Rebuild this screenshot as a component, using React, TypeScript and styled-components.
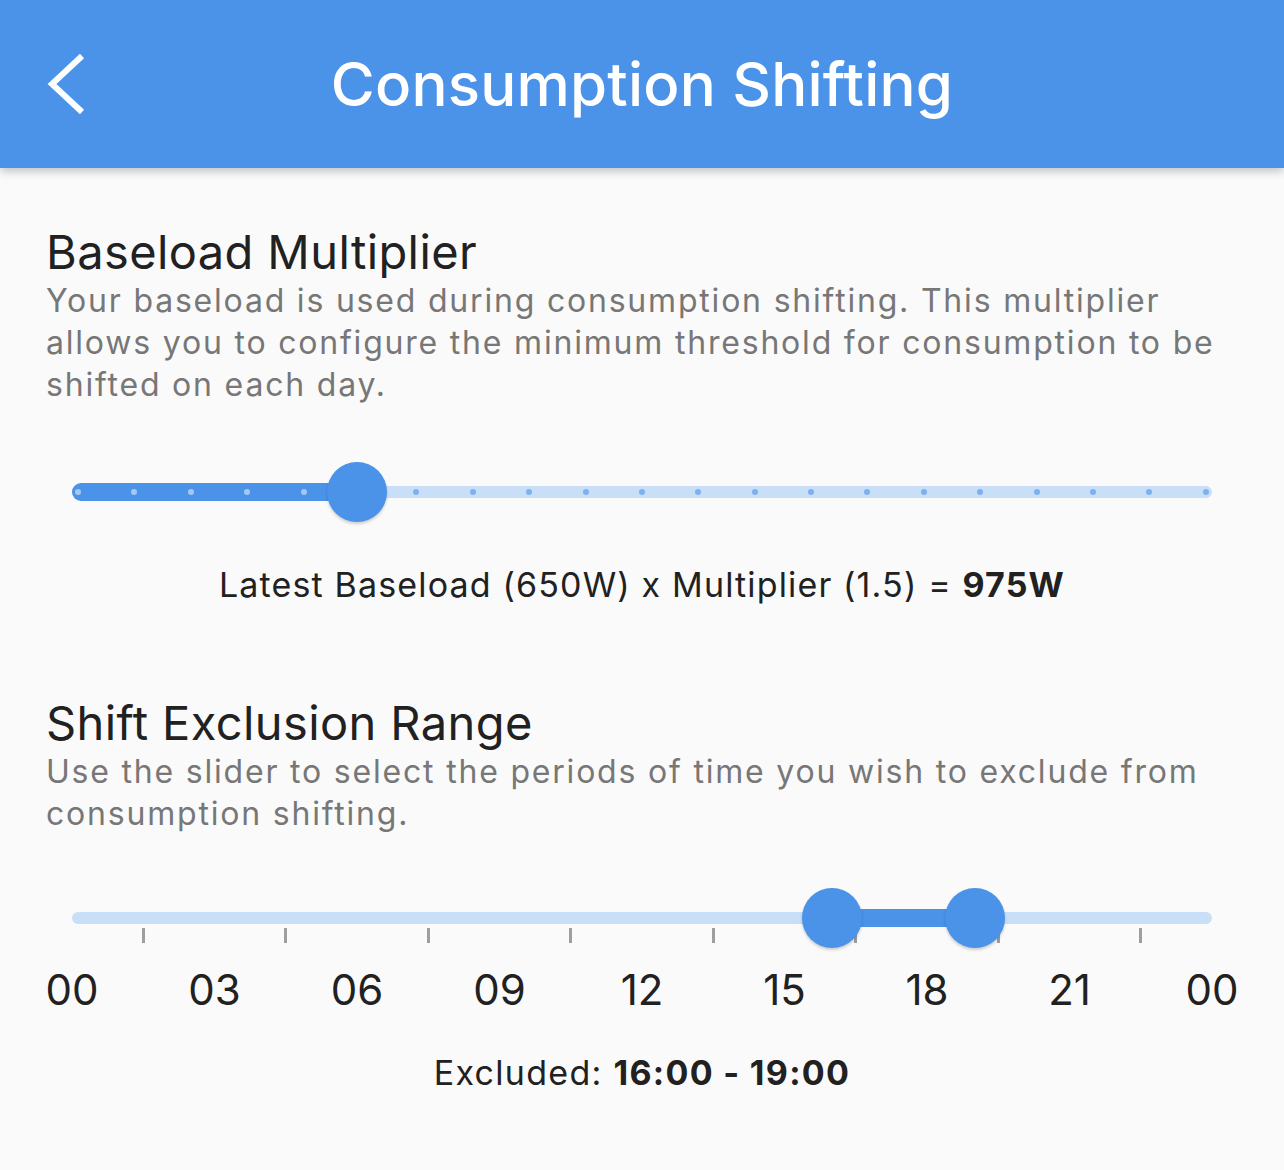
import React from 'react';
import styled, { createGlobalStyle } from 'styled-components';

const BLUE = '#4a93e9';
const TRACK_LIGHT = '#c8dff7';

const GlobalStyle = createGlobalStyle`
  html, body {
    margin: 0;
    padding: 0;
    background: #fafafa;
  }
  body {
    font-family: Inter, "Noto Sans", sans-serif;
    -webkit-font-smoothing: antialiased;
  }
`;

const Page = styled.div`
  width: 1284px;
  min-height: 1170px;
  background: #fafafa;
  overflow: hidden;
`;

const AppBar = styled.header`
  position: relative;
  z-index: 1;
  height: 168px;
  background: ${BLUE};
  display: grid;
  grid-template-columns: 1fr auto 1fr;
  align-items: center;
  box-shadow: 0 3px 9px rgba(0, 0, 0, 0.24);
`;

const BackButton = styled.button`
  justify-self: start;
  margin-left: 38px;
  width: 56px;
  height: 72px;
  padding: 0;
  border: none;
  background: transparent;
  display: flex;
  align-items: center;
  justify-content: center;
  cursor: pointer;
`;

const Title = styled.h1`
  margin: 0;
  color: #ffffff;
  font-family: Inter, "Noto Sans", sans-serif;
  font-size: 60px;
  font-weight: 500;
  line-height: 72px;
  letter-spacing: 0.2px;
`;

const Content = styled.main`
  padding: 0 30px 0 46px;
`;

const Section = styled.section<{ $top: number }>`
  padding-top: ${(p) => p.$top}px;
`;

const Heading = styled.h2`
  margin: 0;
  color: #212121;
  font-size: 47px;
  font-weight: 400;
  line-height: 56px;
  letter-spacing: 0.4px;
`;

const Description = styled.p`
  margin: 0;
  color: #777777;
  font-size: 32px;
  font-weight: 400;
  line-height: 42px;
  letter-spacing: 1.8px;
`;

const SliderArea = styled.div<{ $top: number; $height: number }>`
  margin: ${(p) => p.$top}px 42px 0 26px;
  height: ${(p) => p.$height}px;
  position: relative;
  display: flex;
  align-items: center;
`;

const Track = styled.div`
  position: relative;
  width: 100%;
  height: 12px;
  border-radius: 6px;
  background: ${TRACK_LIGHT};
`;

const ActiveFill = styled.div<{ $roundLeft: boolean }>`
  position: absolute;
  top: -3px;
  height: 18px;
  background: ${BLUE};
  border-radius: ${(p) => (p.$roundLeft ? '9px 0 0 9px' : '0')};
`;

const DotRow = styled.div`
  position: absolute;
  inset: 0 3px;
  display: flex;
  align-items: center;
  justify-content: space-between;
`;

const Dot = styled.span<{ $active: boolean }>`
  width: 6px;
  height: 6px;
  border-radius: 50%;
  background: ${(p) => (p.$active ? '#a4c8f3' : '#7fb1ee')};
`;

const Thumb = styled.span`
  position: absolute;
  top: 50%;
  width: 60px;
  height: 60px;
  border-radius: 50%;
  background: ${BLUE};
  transform: translate(-50%, -50%);
  box-shadow: 0 2px 3px rgba(0, 0, 0, 0.18);
`;

const Summary = styled.div<{ $top: number; $tracking: number }>`
  margin-top: ${(p) => p.$top}px;
  margin-right: 16px;
  text-align: center;
  color: #212121;
  font-size: 34px;
  line-height: 40px;
  letter-spacing: ${(p) => p.$tracking}px;

  b {
    font-weight: 700;
  }
`;

const TickRow = styled.div`
  margin: 0 42px 0 26px;
  height: 15px;
  display: grid;
  grid-template-columns: repeat(8, 1fr);
  justify-items: center;
`;

const Tick = styled.span`
  width: 3px;
  height: 15px;
  background: #9e9e9e;
`;

const ScaleRow = styled.div`
  margin: 22px -29.25px 0 -45.25px;
  display: grid;
  grid-template-columns: repeat(9, 1fr);
  justify-items: center;
  color: #212121;
  font-size: 42px;
  line-height: 50px;
`;

const ChevronLeft = () => (
  <svg width="40" height="64" viewBox="0 0 40 64">
    <polyline
      points="36,4 6,32 36,60"
      fill="none"
      stroke="#ffffff"
      strokeWidth="6"
      strokeLinejoin="miter"
    />
  </svg>
);

const MULTIPLIER_STEPS = 20;
const multiplierStep = 5;
const baseload = 650;
const multiplier = 1 + multiplierStep * 0.1;

const excludeFrom = 16;
const excludeTo = 19;
const hourLabels = ['00', '03', '06', '09', '12', '15', '18', '21', '00'];

const pct = (v: number) => `${v * 100}%`;
const hh = (h: number) => `${String(h).padStart(2, '0')}:00`;

const MultiplierSlider = () => {
  const frac = multiplierStep / MULTIPLIER_STEPS;
  return (
    <SliderArea $top={56} $height={60}>
      <Track>
        <ActiveFill $roundLeft style={{ left: 0, width: pct(frac) }} />
        <DotRow>
          {Array.from({ length: MULTIPLIER_STEPS + 1 }, (_, i) => (
            <Dot key={i} $active={i <= multiplierStep} />
          ))}
        </DotRow>
        <Thumb style={{ left: pct(frac) }} />
      </Track>
    </SliderArea>
  );
};

const ExclusionSlider = () => {
  const a = excludeFrom / 24;
  const b = excludeTo / 24;
  return (
    <>
      <SliderArea $top={73} $height={20}>
        <Track>
          <ActiveFill $roundLeft={false} style={{ left: pct(a), width: pct(b - a) }} />
          <Thumb style={{ left: pct(a) }} />
          <Thumb style={{ left: pct(b) }} />
        </Track>
      </SliderArea>
      <TickRow>
        {Array.from({ length: 8 }, (_, i) => (
          <Tick key={i} />
        ))}
      </TickRow>
      <ScaleRow>
        {hourLabels.map((l, i) => (
          <span key={i}>{l}</span>
        ))}
      </ScaleRow>
    </>
  );
};

export default function App() {
  return (
    <Page>
      <GlobalStyle />
      <AppBar>
        <BackButton aria-label="Back">
          <ChevronLeft />
        </BackButton>
        <Title>Consumption Shifting</Title>
        <span />
      </AppBar>
      <Content>
        <Section $top={56}>
          <Heading>Baseload Multiplier</Heading>
          <Description>
            Your baseload is used during consumption shifting. This multiplier allows you to
            configure the minimum threshold for consumption to be shifted on each day.
          </Description>
          <MultiplierSlider />
          <Summary $top={43} $tracking={1.15}>
            Latest Baseload ({baseload}W) x Multiplier ({multiplier.toFixed(1)}) ={' '}
            <b>{Math.round(baseload * multiplier)}W</b>
          </Summary>
        </Section>
        <Section $top={90}>
          <Heading>Shift Exclusion Range</Heading>
          <Description>
            Use the slider to select the periods of time you wish to exclude from consumption
            shifting.
          </Description>
          <ExclusionSlider />
          <Summary $top={38} $tracking={1.3}>
            Excluded: <b>{hh(excludeFrom)} - {hh(excludeTo)}</b>
          </Summary>
        </Section>
      </Content>
    </Page>
  );
}
